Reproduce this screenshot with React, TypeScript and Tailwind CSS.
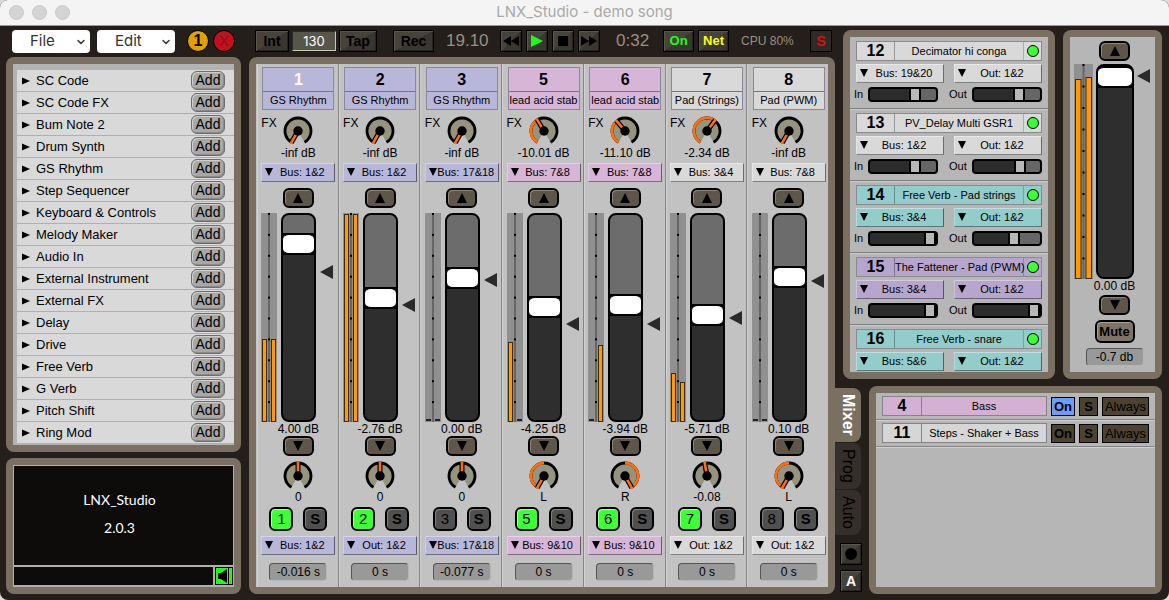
import { useState } from "react";
import type { ReactNode } from "react";
import { ChevronDown } from "lucide-react";
import clsx from "clsx";

type Level = [number, number];

const MODULES = [
  "SC Code", "SC Code FX", "Bum Note 2", "Drum Synth", "GS Rhythm", "Step Sequencer",
  "Keyboard & Controls", "Melody Maker", "Audio In", "External Instrument", "External FX",
  "Delay", "Drive", "Free Verb", "G Verb", "Pitch Shift", "Ring Mod",
];

const LILAC = "bg-[#b9b7d9]";
const PINK = "bg-[#d7b5d7]";
const LIGHT = "bg-[#d9d9d9]";
const TEAL = "bg-[#92cccb]";
const PURPLE = "bg-[#b6a6cd]";

type Track = {
  id: number;
  name: string;
  tint: string;
  selected?: boolean;
  fx: number;
  fxText: string;
  send: string;
  gain: number;
  gainText: string;
  peak: number;
  level: Level;
  pan: number;
  panText: string;
  on: boolean;
  out: string;
  delay: string;
};

// gain is fader travel from the bottom, peak is the marker position, pan/fx are knob angles
const TRACKS: Track[] = [
  { id: 1, name: "GS Rhythm", tint: LILAC, selected: true, fx: -150, fxText: "-inf dB", send: "Bus: 1&2", gain: 165, gainText: "4.00 dB", peak: 59, level: [83, 83], pan: 0, panText: "0", on: true, out: "Bus: 1&2", delay: "-0.016 s" },
  { id: 2, name: "GS Rhythm", tint: LILAC, fx: -150, fxText: "-inf dB", send: "Bus: 1&2", gain: 111, gainText: "-2.76 dB", peak: 92, level: [208, 208], pan: 0, panText: "0", on: true, out: "Out: 1&2", delay: "0 s" },
  { id: 3, name: "GS Rhythm", tint: LILAC, fx: -150, fxText: "-inf dB", send: "Bus: 17&18", gain: 131, gainText: "0.00 dB", peak: 67, level: [0, 0], pan: 0, panText: "0", on: false, out: "Bus: 17&18", delay: "-0.077 s" },
  { id: 5, name: "lead acid stab", tint: PINK, fx: -31, fxText: "-10.01 dB", send: "Bus: 7&8", gain: 102, gainText: "-4.25 dB", peak: 111, level: [80, 0], pan: -150, panText: "L", on: true, out: "Bus: 9&10", delay: "0 s" },
  { id: 6, name: "lead acid stab", tint: PINK, fx: -40, fxText: "-11.10 dB", send: "Bus: 7&8", gain: 104, gainText: "-3.94 dB", peak: 111, level: [0, 77], pan: 150, panText: "R", on: true, out: "Bus: 9&10", delay: "0 s" },
  { id: 7, name: "Pad (Strings)", tint: LIGHT, fx: 37, fxText: "-2.34 dB", send: "Bus: 3&4", gain: 94, gainText: "-5.71 dB", peak: 105, level: [49, 40], pan: -10, panText: "-0.08", on: true, out: "Out: 1&2", delay: "0 s" },
  { id: 8, name: "Pad (PWM)", tint: LIGHT, fx: -150, fxText: "-inf dB", send: "Bus: 7&8", gain: 132, gainText: "0.10 dB", peak: 68, level: [0, 0], pan: -150, panText: "L", on: false, out: "Out: 1&2", delay: "0 s" },
];

type Effect = { id: number; name: string; tint: string; bus: string; mix?: [number, number] };

const EFFECTS: Effect[] = [
  { id: 12, name: "Decimator hi conga", tint: LIGHT, bus: "Bus: 19&20", mix: [39, 39] },
  { id: 13, name: "PV_Delay Multi GSR1", tint: LIGHT, bus: "Bus: 1&2", mix: [39, 40] },
  { id: 14, name: "Free Verb - Pad strings", tint: TEAL, bus: "Bus: 3&4", mix: [54, 34] },
  { id: 15, name: "The Fattener - Pad (PWM)", tint: PURPLE, bus: "Bus: 3&4", mix: [54, 54] },
  { id: 16, name: "Free Verb - snare", tint: TEAL, bus: "Bus: 5&6" },
];

const polar = (deg: number, r: number) => {
  const a = (deg * Math.PI) / 180;
  return `${(15 + r * Math.sin(a)).toFixed(2)} ${(15 - r * Math.cos(a)).toFixed(2)}`;
};

const arc = (from: number, to: number, r: number) =>
  `M${polar(from, r)}A${r} ${r} 0 ${to - from > 180 ? 1 : 0} 1 ${polar(to, r)}`;

const Panel = ({ className, children }: { className?: string; children: ReactNode }) => (
  <section className={clsx("flex rounded-lg bg-[#7a7061] p-[7px]", className)}>{children}</section>
);

const Knob = ({ angle, origin, label }: { angle: number; origin: number; label: string }) => (
  <div className="relative size-[30px]">
    <svg viewBox="0 0 30 30" className="size-full">
      <path d={`${arc(-150, 150, 12)}L15 15Z`} fill="#96937f" />
      <path d={arc(-150, 150, 13)} fill="none" stroke="#000" strokeWidth="2.8" />
      {angle !== origin && (
        <path d={arc(Math.min(angle, origin), Math.max(angle, origin), 13)} fill="none" stroke="#ff6f0f" strokeWidth="2.8" />
      )}
      <g transform={`rotate(${angle} 15 15)`}>
        <path d="M15 15V1.5" stroke="#000" strokeWidth="5" />
        <path d="M15 11V0.5" stroke="#ff6f0f" strokeWidth="2.6" />
      </g>
      <circle cx="15" cy="15" r="4.7" />
    </svg>
    <input type="range" min={-150} max={150} defaultValue={angle} aria-label={label} className="absolute inset-0 size-full opacity-0" />
  </div>
);

const Menu = ({ value, tint, label, className }: { value: string; tint: string; label: string; className?: string }) => (
  <div className={clsx("relative h-[19px]", className)}>
    <select
      aria-label={label}
      defaultValue={value}
      className={clsx(
        "block size-full appearance-none border border-t-white/40 border-r-black/50 border-b-black/40 border-l-white/30 pl-2 text-[11px] leading-[17px] [text-align-last:center]",
        tint,
      )}
    >
      <option>{value}</option>
    </select>
    <svg viewBox="0 0 8 8" className="pointer-events-none absolute top-[5px] left-1 size-2">
      <path d="M0 0H8L4 8Z" />
    </svg>
  </div>
);

const ArrowButton = ({ down, label }: { down?: boolean; label: string }) => (
  <button
    aria-label={label}
    className="flex h-5 w-[31px] shrink-0 items-center justify-center rounded-md border-2 border-black bg-[#5f564a] shadow-[inset_1px_1px_0_#8d857a]"
  >
    <svg viewBox="0 0 10 10" className="size-2.5">
      <path d={down ? "M0 0H10L5 10Z" : "M0 10H10L5 0Z"} />
    </svg>
  </button>
);

const Meter = ({ level, width, height }: { level: Level; width: number; height: number }) => {
  const bar = (width - 6) / 2;
  return (
    <svg width={width} height={height} className="shrink-0">
      <rect width={width} height={height} fill="#909090" />
      <rect x={width / 2 - 1} width="2" height={height} fill="#666" />
      {Array.from({ length: 10 }, (_, i) => (
        <rect key={i} x={width / 2 - 1} y={(i * height) / 10} width="2" height="2" />
      ))}
      {level.map((h, i) => {
        const x = i ? width - bar - 1 : 1;
        return h ? (
          <g key={i}>
            <rect x={x} y={height - h} width={bar} height={h} fill="#3b2c10" />
            <rect x={x + 1} y={height - h + 1} width={bar - 2} height={h - 2} fill="#ff9a05" />
          </g>
        ) : (
          <rect key={i} x={x} y={height - 3} width={bar} height="2" fill="#222" />
        );
      })}
    </svg>
  );
};

// the thumb inherits the vertical writing mode, so border-x draws its top and bottom edges
const Fader = ({ start, travel, label, className }: { start: number; travel: number; label: string; className?: string }) => {
  const [value, setValue] = useState(start);
  const top = travel - value;
  return (
    <input
      type="range"
      min={0}
      max={travel}
      value={value}
      aria-label={label}
      onChange={(e) => setValue(Number(e.target.value))}
      style={{ backgroundImage: `linear-gradient(#6c6c6c ${top}px, #000 ${top}px ${top + 22}px, #2e2e2e ${top + 22}px)` }}
      className={clsx(
        "block shrink-0 appearance-none rounded-lg border-2 border-black [direction:rtl] [writing-mode:vertical-lr]",
        "[&::-webkit-slider-thumb]:h-[22px] [&::-webkit-slider-thumb]:appearance-none [&::-webkit-slider-thumb]:rounded-md",
        "[&::-webkit-slider-thumb]:border-x-2 [&::-webkit-slider-thumb]:border-y-0 [&::-webkit-slider-thumb]:border-solid [&::-webkit-slider-thumb]:border-black [&::-webkit-slider-thumb]:bg-white",
        className,
      )}
    />
  );
};

const PeakMarker = ({ at, height }: { at: number; height: number }) => (
  <svg width="13" height={height} className="shrink-0">
    <path d={`M0 ${at}L13 ${at - 7}V${at + 7}Z`} fill="#2a2a2a" />
  </svg>
);

const MixSlider = ({ start, label }: { start: number; label: string }) => {
  const [value, setValue] = useState(start);
  return (
    <label className="flex items-center justify-between text-[11px] leading-[15px]">
      {label}
      <input
        type="range"
        min={0}
        max={54}
        value={value}
        onChange={(e) => setValue(Number(e.target.value))}
        style={{ backgroundImage: `linear-gradient(90deg, #2c2c2c ${value}px, #000 ${value}px ${value + 12}px, #666 ${value + 12}px)` }}
        className="h-[15px] w-[70px] appearance-none rounded border-2 border-black [&::-webkit-slider-thumb]:h-[11px] [&::-webkit-slider-thumb]:w-3 [&::-webkit-slider-thumb]:appearance-none [&::-webkit-slider-thumb]:border-x-2 [&::-webkit-slider-thumb]:border-y-0 [&::-webkit-slider-thumb]:border-solid [&::-webkit-slider-thumb]:border-black [&::-webkit-slider-thumb]:bg-[#b8b8b8]"
      />
    </label>
  );
};

const Readout = ({ value, label }: { value: string; label: string }) => (
  <input
    readOnly
    value={value}
    aria-label={label}
    className="h-[18px] w-[58px] rounded border border-[#555] border-r-[#b5b5b5] border-b-[#b5b5b5] bg-[#999] text-center text-[12px]"
  />
);

const Strip = ({ track }: { track: Track }) => {
  const [on, setOn] = useState(track.on);
  const [solo, setSolo] = useState(false);
  return (
    <div className="flex min-w-0 flex-1 flex-col items-center border-l border-[#858585] bg-[#c2c2c2] pt-[3px] pb-1.5 pl-0.5 shadow-[inset_1px_0_0_#d2d2d2] first:border-transparent">
      <div className={clsx("w-[72px] border border-[#8b8798] text-center", track.tint)}>
        <div className={clsx("h-6 border-b border-[#77738a] text-[16px] leading-6 font-bold", track.selected && "text-white")}>{track.id}</div>
        <div className="h-[17px] text-[11px] leading-[17px] whitespace-nowrap">{track.name}</div>
      </div>
      <div className="mt-1.5 grid w-[74px] grid-cols-[1fr_30px_1fr]">
        <span className="text-[12px] leading-[14px]">FX</span>
        <Knob angle={track.fx} origin={-150} label={`FX send ${track.id}`} />
      </div>
      <div className="text-[12px] leading-[14px]">{track.fxText}</div>
      <Menu value={track.send} tint={track.tint} label={`Send ${track.id}`} className="mt-[3px] w-[74px]" />
      <div className="mt-1.5">
        <ArrowButton label={`Volume up ${track.id}`} />
      </div>
      <div className="mt-[5px] flex w-[74px] gap-1">
        <Meter level={track.level} width={16} height={209} />
        <Fader start={track.gain} travel={183} label={`Volume ${track.id}`} className="h-[209px] w-[35px] [&::-webkit-slider-thumb]:w-[31px]" />
        <PeakMarker at={track.peak} height={209} />
      </div>
      <div className="text-[12px] leading-[14px]">{track.gainText}</div>
      <ArrowButton down label={`Volume down ${track.id}`} />
      <div className="mt-[5px]">
        <Knob angle={track.pan} origin={0} label={`Pan ${track.id}`} />
      </div>
      <div className="text-[12px] leading-[12px]">{track.panText}</div>
      <div className="mt-1 flex gap-2.5">
        <button
          onClick={() => setOn(!on)}
          className={clsx(
            "size-6 rounded-md border-2 border-black text-[15px] leading-5",
            on ? "bg-[#3dff35] shadow-[inset_1px_1px_0_#a5ffa0]" : "bg-[#505050] shadow-[inset_1px_1px_0_#808080]",
          )}
        >
          {track.id}
        </button>
        <button
          onClick={() => setSolo(!solo)}
          className={clsx("size-6 rounded-md border-2 border-black text-[15px] leading-5 font-bold shadow-[inset_1px_1px_0_#808080]", solo ? "bg-[#ffe23d]" : "bg-[#505050]")}
        >
          S
        </button>
      </div>
      <Menu value={track.out} tint={track.tint} label={`Output ${track.id}`} className="mt-[5px] mb-2 w-[74px]" />
      <Readout value={track.delay} label={`Delay ${track.id}`} />
    </div>
  );
};

const EffectBlock = ({ fx }: { fx: Effect }) => (
  <div className="border-b border-[#7d7d7d] px-1.5 pt-1 shadow-[0_1px_0_#ccc] last:border-0 last:shadow-none">
    <div className={clsx("flex h-5 items-center border border-[#8a8a8a] text-center", fx.tint)}>
      <b className="w-[38px] border-r border-black/30 text-[16px] leading-[18px]">{fx.id}</b>
      <span className="min-w-0 flex-1 text-[11px] leading-[18px] whitespace-nowrap">{fx.name}</span>
      <span className="flex h-[18px] w-[18px] items-center justify-center border-l border-black/20">
        <button aria-label={`Power ${fx.id}`} className="size-3 rounded-full border border-black bg-[#3dff35]" />
      </span>
    </div>
    <div className="mt-[3px] flex justify-between">
      <Menu value={fx.bus} tint={fx.tint} label={`Input ${fx.id}`} className="w-[88px]" />
      <Menu value="Out: 1&2" tint={fx.tint} label={`Output ${fx.id}`} className="w-[88px]" />
    </div>
    {fx.mix && (
      <div className="-ml-0.5 grid grid-cols-[84px_93px] justify-between pt-1 pb-1.5">
        <MixSlider start={fx.mix[0]} label="In" />
        <MixSlider start={fx.mix[1]} label="Out" />
      </div>
    )}
  </div>
);

const ToolButton = ({ children, className, label }: { children: ReactNode; className?: string; label?: string }) => (
  <button
    aria-label={label}
    className={clsx(
      "flex h-[22px] items-center justify-center border border-black bg-linear-to-br from-[#45433a] from-50% to-[#38362f] to-50% font-bold shadow-[inset_1px_1px_0_#5a584d,inset_-1px_-1px_0_#25241e]",
      className,
    )}
  >
    {children}
  </button>
);

const DropMenu = ({ name }: { name: string }) => (
  <div className="relative h-[23px] w-[78px]">
    <select aria-label={name} className="block size-full appearance-none rounded bg-white pl-[18px] font-['Inter',sans-serif] text-[15px] text-[#333]">
      <option>{name}</option>
    </select>
    <ChevronDown size={12} strokeWidth={3} className="pointer-events-none absolute top-1.5 right-[3px] text-[#333]" />
  </div>
);

const Toolbar = () => (
  <div className="flex h-[31px] items-center pr-[3px] pb-px pl-3">
    <div className="flex gap-[7px]">
      <DropMenu name="File" />
      <DropMenu name="Edit" />
    </div>
    <div className="ml-3 flex gap-1">
      <button className="size-[22px] rounded-full border border-black bg-[#dfa106] text-[16px] leading-5 font-bold">1</button>
      <button className="size-[22px] rounded-full border border-black bg-[#c1121c] text-[15px] leading-5 text-[#8a1018]">X</button>
    </div>
    <div className="ml-5 flex gap-[3px] text-[14px]">
      <ToolButton className="w-[34px]">Int</ToolButton>
      <input
        aria-label="Tempo"
        defaultValue="130"
        className="my-px h-5 w-11 border border-[#2e2d24] border-r-[#c8c6b8] border-b-[#c8c6b8] bg-[#57564a] text-center font-['Inter',sans-serif] text-[13px] text-white"
      />
      <ToolButton className="w-[38px]">Tap</ToolButton>
    </div>
    <ToolButton className="ml-4 w-[41px] text-[14px]">Rec</ToolButton>
    <span className="ml-3 w-[42px] text-[17px] text-[#998f80]">19.10</span>
    <div className="ml-3 flex gap-1">
      <ToolButton className="w-[22px]" label="Rewind">
        <svg viewBox="0 0 16 10" className="w-4 shrink-0">
          <path d="M8 0V10L0 5ZM16 0V10L8 5Z" />
        </svg>
      </ToolButton>
      <ToolButton className="w-[22px]" label="Play">
        <svg viewBox="0 0 12 12" className="w-3 shrink-0">
          <path d="M0 0L12 6L0 12Z" fill="#1dff12" />
        </svg>
      </ToolButton>
      <ToolButton className="w-[22px]" label="Stop">
        <svg viewBox="0 0 10 10" className="w-2.5 shrink-0">
          <path d="M0 0H10V10H0Z" />
        </svg>
      </ToolButton>
      <ToolButton className="w-[22px]" label="Forward">
        <svg viewBox="0 0 16 10" className="w-4 shrink-0">
          <path d="M0 0V10L8 5ZM8 0V10L16 5Z" />
        </svg>
      </ToolButton>
    </div>
    <span className="ml-4 text-[17px] text-[#998f80]">0:32</span>
    <div className="ml-3.5 flex gap-1 text-[13px]">
      <ToolButton className="w-[31px] text-[#1dff12]">On</ToolButton>
      <ToolButton className="w-[31px] text-[#fbff12]">Net</ToolButton>
    </div>
    <span className="ml-3 text-[12px] whitespace-nowrap text-[#998f80]">CPU 80%</span>
    <button className="ml-auto size-[22px] border border-black bg-[#2e2a27] text-[15px] leading-5 font-bold text-[#d8100c]">S</button>
  </div>
);

const Library = () => (
  <Panel>
    <ul className="flex-1 bg-[#b3b3b3] pt-1.5 pb-px pl-1">
      {MODULES.map((name) => (
        <li key={name} className="flex h-[22px] items-center border-b border-[#b0b0b0] bg-[#d9d9d9] pr-[9px] pl-[5px]">
          <svg viewBox="0 0 8 8" className="mr-1.5 size-2">
            <path d="M0 0.5L8 4L0 7.5Z" />
          </svg>
          <span className="flex-1 text-[13px]">{name}</span>
          <button
            aria-label={`Add ${name}`}
            className="h-[19px] w-[34px] rounded-md border border-[#6d6d6d] bg-[#a8a8a8] text-[14px] leading-[17px] shadow-[inset_1px_1px_0_#cfcfcf,inset_-1px_-1px_0_#8a8a8a]"
          >
            Add
          </button>
        </li>
      ))}
    </ul>
  </Panel>
);

const About = () => (
  <Panel className="flex-1">
    <div className="flex flex-1 flex-col gap-0.5 bg-[#b0b0b0] p-px pb-0.5">
      <div className="flex-1 bg-[#0d0c0a] pt-5 pr-2 text-center font-['Lato',sans-serif] text-[14px] leading-7 text-white">
        <h1>LNX_Studio</h1>
        <p>2.0.3</p>
      </div>
      <div className="flex h-[18px] gap-0.5">
        <input aria-label="Message" className="min-w-0 flex-1 bg-[#0d0c0a] px-1 text-[12px] text-white" />
        <button aria-label="Speaker" className="w-[18px] border border-black bg-[#1dff12]">
          <svg viewBox="0 0 16 16">
            <path d="M2 5H5L11 1V15L5 11H2Z" />
            <path d="M12.5 0V16" stroke="#000" strokeWidth="1" />
          </svg>
        </button>
      </div>
    </div>
  </Panel>
);

const Master = () => (
  <Panel className="w-[99px] shrink-0">
    <div className="flex flex-1 flex-col items-center bg-[#b6b6b6] pt-1 pl-1">
      <ArrowButton label="Master up" />
      <div className="mt-[3px] flex w-full gap-[3px]">
        <Meter level={[200, 202]} width={19} height={215} />
        <Fader start={189} travel={189} label="Master volume" className="h-[215px] w-[38px] [&::-webkit-slider-thumb]:w-[34px]" />
        <PeakMarker at={12} height={215} />
      </div>
      <div className="text-[12px] leading-[14px]">0.00 dB</div>
      <div className="mt-0.5 mb-[5px]">
        <ArrowButton down label="Master down" />
      </div>
      <button className="mb-[5px] h-[23px] w-10 shrink-0 rounded-md border-2 border-black bg-[#7d7465] text-[13px] leading-[19px] font-bold shadow-[inset_1px_1px_0_#aaa294]">
        Mute
      </button>
      <Readout value="-0.7 db" label="Peak" />
    </div>
  </Panel>
);

const PLAYERS = [
  { id: 4, name: "Bass", tint: "bg-[#d4b1d4]", on: true },
  { id: 11, name: "Steps - Shaker + Bass", tint: "bg-[#d6d6d6]", on: false },
];

const Players = () => (
  <Panel className="flex-1">
    <div className="flex-1 bg-[#b6b6b6]">
      {PLAYERS.map((p) => (
        <div key={p.id} className="flex h-[27px] items-center gap-1 border-b border-[#858585] pr-1.5 pl-1.5 shadow-[0_1px_0_#cfcfcf]">
          <div className={clsx("flex h-5 flex-1 border border-[#858585] text-center", p.tint)}>
            <b className="w-[39px] border-r border-[#858585] text-[16px] leading-[18px]">{p.id}</b>
            <span className="flex-1 text-[11px] leading-[18px]">{p.name}</span>
          </div>
          <button className={clsx("h-[19px] w-6 border border-black text-[13px] leading-[17px] font-bold", p.on ? "bg-[#6b9dfb]" : "bg-[#4b4330]")}>On</button>
          <button className="h-[19px] w-[19px] border border-black bg-[#4b4330] text-[13px] leading-[17px] font-bold">S</button>
          <button className="h-[19px] w-[47px] border border-black bg-[#4b4330] text-[13px] leading-[17px]">Always</button>
        </div>
      ))}
    </div>
  </Panel>
);

const TABS = ["Mixer", "Prog", "Auto"];

const SideTabs = () => {
  const [active, setActive] = useState("Mixer");
  return (
    <div className="flex w-[27px] flex-col pt-0.5">
      {TABS.map((tab) => (
        <button
          key={tab}
          onClick={() => setActive(tab)}
          className={clsx(
            "mb-px flex w-[26px] items-center rounded-r-lg pt-1.5 pb-1.5 text-[16px] leading-6 [writing-mode:vertical-rl]",
            active === tab ? "bg-[#7a7061] font-bold text-white" : "bg-[#342f2a] text-black",
          )}
        >
          {tab}
        </button>
      ))}
      <div className="mt-auto mb-0.5 ml-[5px] flex flex-col gap-[5px]">
        <ToolButton className="w-[22px]" label="Record automation">
          <span className="size-3 shrink-0 rounded-full bg-black" />
        </ToolButton>
        <ToolButton className="w-[22px] text-[14px] text-white">A</ToolButton>
      </div>
    </div>
  );
};

const App = () => (
  <div className="min-h-screen bg-[#dcdcdc]">
    <div className="flex min-h-screen flex-col overflow-hidden rounded-lg bg-[#251f1b] font-['Liberation_Sans',Arial,sans-serif] text-black">
      <header className="relative flex h-[26px] items-center justify-center border-b border-[#999] bg-[#f4f4f4]">
        <div className="absolute left-[9px] flex gap-2">
          <span className="size-[15px] rounded-full border border-[#c8c8c8] bg-[#d4d4d4]" />
          <span className="size-[15px] rounded-full border border-[#c8c8c8] bg-[#d4d4d4]" />
          <span className="size-[15px] rounded-full border border-[#c8c8c8] bg-[#d4d4d4]" />
        </div>
        <span className="font-['Inter',sans-serif] text-[15px] text-[#a9a9a9]">LNX_Studio - demo song</span>
      </header>
      <div className="flex flex-1 pr-[7px] pb-1.5">
        <div className="flex min-w-0 flex-1 flex-col">
          <Toolbar />
          <div className="flex flex-1 gap-2 pl-1.5">
            <div className="flex w-[235px] shrink-0 flex-col gap-1.5">
              <Library />
              <About />
            </div>
            <Panel className="min-w-0 flex-1">
              {TRACKS.map((track) => (
                <Strip key={track.id} track={track} />
              ))}
            </Panel>
          </div>
        </div>
        <div className="flex w-[327px] shrink-0 flex-col gap-[7px] pt-1">
          <div className="flex gap-2 pl-2">
            <Panel className="min-w-0 flex-1">
              <div className="min-w-0 flex-1 bg-[#b6b6b6] pb-px">
                {EFFECTS.map((fx) => (
                  <EffectBlock key={fx.id} fx={fx} />
                ))}
              </div>
            </Panel>
            <Master />
          </div>
          <div className="flex flex-1 gap-[7px]">
            <SideTabs />
            <Players />
          </div>
        </div>
      </div>
    </div>
  </div>
);

export default App;
